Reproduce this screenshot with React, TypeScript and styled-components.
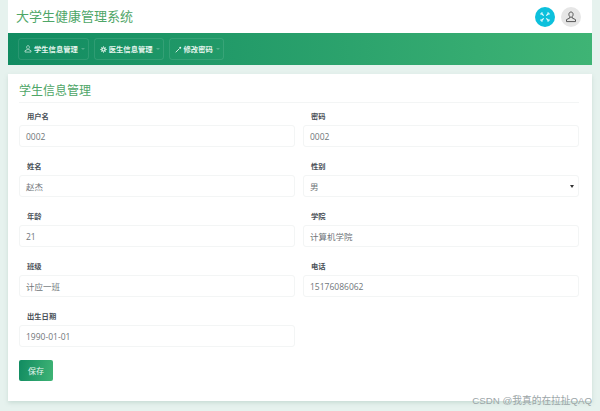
import styled, { createGlobalStyle } from "styled-components";

const GlobalStyle = createGlobalStyle`
    html, body {
        margin: 0;
        padding: 0;
        height: 411px;
        overflow: hidden;
        background: #e6f2ee;
        font-family: "Open Sans", "Noto Sans CJK SC", sans-serif;
    }
`;

const Page = styled.div`
    position: relative;
    width: 600px;
    height: 411px;
    padding: 0 8px;
    box-sizing: border-box;
`;

const Header = styled.header`
    height: 33px;
    background: #fff;
    display: flex;
    align-items: center;
    justify-content: space-between;
    padding: 0 11px 0 8px;
`;

const Brand = styled.div`
    font-size: 13px;
    line-height: 30px;
    height: 32px;
    color: #4ea667;
`;

const HeaderActions = styled.div`
    display: flex;
    gap: 6px;
`;

const RoundButton = styled.div<{ $bg: string; $color: string }>`
    width: 20px;
    height: 20px;
    border-radius: 50%;
    background: ${(p) => p.$bg};
    color: ${(p) => p.$color};
    display: flex;
    align-items: center;
    justify-content: center;
`;

const NavBar = styled.nav`
    height: 32px;
    background: linear-gradient(90deg, #118b61, #3fb475);
    display: flex;
    align-items: center;
    gap: 5px;
    padding: 0 10px;
`;

const NavItem = styled.div`
    height: 22px;
    box-sizing: border-box;
    padding: 0 3px 0 5px;
    display: flex;
    align-items: center;
    gap: 2px;
    border: 1px solid rgba(255, 255, 255, 0.1);
    border-radius: 3px;
    color: #e6f5ee;
    font-size: 7.3px;
    font-weight: 600;
`;

const NavCaret = styled.span`
    width: 0;
    height: 0;
    margin-left: 1px;
    border-left: 2px solid transparent;
    border-right: 2px solid transparent;
    border-top: 2px solid rgba(255, 255, 255, 0.25);
`;

const Card = styled.main`
    margin-top: 9px;
    height: 327px;
    box-sizing: border-box;
    background: #fff;
    padding: 8px 13px 0 11px;
    box-shadow: 0 2px 4px rgba(120, 160, 145, 0.25);
`;

const CardTitle = styled.h2`
    margin: 0;
    height: 20px;
    font-size: 12px;
    line-height: 18px;
    font-weight: 400;
    color: #4ea667;
    border-bottom: 1px solid #f3f5f5;
`;

const FormGrid = styled.div`
    display: grid;
    grid-template-columns: 276px 276px;
    column-gap: 8px;
    grid-auto-rows: 50px;
    margin-top: 9px;
`;

const Field = styled.div`
    display: flex;
    flex-direction: column;
`;

const Label = styled.label`
    height: 13px;
    padding-left: 8px;
    font-size: 7.3px;
    line-height: 8px;
    font-weight: 600;
    color: #4a5158;
`;

const InputBox = styled.div`
    height: 22px;
    box-sizing: border-box;
    border: 1px solid #f3f5f5;
    border-radius: 3px;
    padding: 0 6px;
    display: flex;
    align-items: center;
    justify-content: space-between;
    font-size: 8.5px;
    color: #70767a;
`;

const Caret = styled.span`
    width: 0;
    height: 0;
    border-left: 2px solid transparent;
    border-right: 2px solid transparent;
    border-top: 3px solid #333;
    margin-right: -2px;
`;

const SaveButton = styled.button`
    display: block;
    width: 34px;
    height: 21px;
    margin-top: -2px;
    padding: 0;
    border: 0;
    border-radius: 2px;
    background: linear-gradient(100deg, #118b61, #3fb475);
    color: #e8f6ef;
    font-family: inherit;
    font-size: 8px;
`;

const Watermark = styled.div`
    position: absolute;
    right: 8px;
    bottom: 4px;
    font-family: "Liberation Sans", "Noto Sans CJK SC", sans-serif;
    font-size: 9.7px;
    line-height: 12px;
    color: #9ba5a7;
    white-space: nowrap;
`;

const ExpandIcon = () => (
    <svg width="10" height="10" viewBox="0 0 10 10" fill="none" stroke="currentColor" strokeWidth="1.2">
        <path d="M1.5 1.5l2.2 2.2M8.5 1.5L6.3 3.7M1.5 8.5l2.2-2.2M8.5 8.5L6.3 6.3" />
        <path d="M1 2.8V1h1.8M7.2 1H9v1.8M1 7.2V9h1.8M7.2 9H9V7.2" strokeWidth="1" />
    </svg>
);

const UserIcon = ({ size }: { size: number }) => (
    <svg width={size} height={size} viewBox="0 0 12 12" fill="none" stroke="currentColor" strokeWidth="1">
        <path d="M6 1c1.3 0 2.1 1 2.1 2.4S7.3 6.2 6 6.2 3.9 4.8 3.9 3.4 4.7 1 6 1z" />
        <path d="M4.8 6v1L1.5 8.6v2h9v-2L7.2 7V6" />
    </svg>
);

const GearIcon = () => (
    <svg width="7" height="7" viewBox="0 0 8 8" fill="none" stroke="currentColor">
        <circle cx="4" cy="4" r="1.9" strokeWidth="1.6" />
        <path d="M4 .3v1M4 6.7v1M.3 4h1M6.7 4h1M1.4 1.4l.7.7M5.9 5.9l.7.7M1.4 6.6l.7-.7M5.9 2.1l.7-.7" strokeWidth="1" />
    </svg>
);

const KeyIcon = () => (
    <svg width="7" height="7" viewBox="0 0 8 8" fill="none" stroke="currentColor">
        <path d="M.8 7.2L5 3" strokeWidth="1" />
        <circle cx="6" cy="2" r="1.1" fill="currentColor" strokeWidth="0" />
    </svg>
);

const fields = [
    { label: "用户名", value: "0002" },
    { label: "密码", value: "0002" },
    { label: "姓名", value: "赵杰" },
    { label: "性别", value: "男", select: true },
    { label: "年龄", value: "21" },
    { label: "学院", value: "计算机学院" },
    { label: "班级", value: "计应一班" },
    { label: "电话", value: "15176086062" },
    { label: "出生日期", value: "1990-01-01" },
];

const App = () => (
    <Page>
        <GlobalStyle />
        <Header>
            <Brand>大学生健康管理系统</Brand>
            <HeaderActions>
                <RoundButton $bg="#0cc0dc" $color="#e4fafd">
                    <ExpandIcon />
                </RoundButton>
                <RoundButton $bg="#e6e6e6" $color="#555">
                    <UserIcon size={12} />
                </RoundButton>
            </HeaderActions>
        </Header>
        <NavBar>
            <NavItem>
                <UserIcon size={8} />
                学生信息管理
                <NavCaret />
            </NavItem>
            <NavItem>
                <GearIcon />
                医生信息管理
                <NavCaret />
            </NavItem>
            <NavItem>
                <KeyIcon />
                修改密码
                <NavCaret />
            </NavItem>
        </NavBar>
        <Card>
            <CardTitle>学生信息管理</CardTitle>
            <FormGrid>
                {fields.map((field) => (
                    <Field key={field.label}>
                        <Label>{field.label}</Label>
                        <InputBox>
                            {field.value}
                            {field.select && <Caret />}
                        </InputBox>
                    </Field>
                ))}
            </FormGrid>
            <SaveButton>保存</SaveButton>
        </Card>
        <Watermark>CSDN @我真的在拉扯QAQ</Watermark>
    </Page>
);

export default App;
